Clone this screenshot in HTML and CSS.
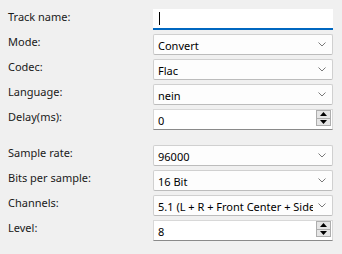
FILE: index.html
```html
<!DOCTYPE html>
<html lang="en">
<head>
<meta charset="UTF-8">
<title>Track settings</title>
<link rel="stylesheet" href="styles.css">
</head>
<body>
<div class="form">
    <div class="group">
        <label class="label">Track name:</label>
        <div class="field text-field"><span class="caret"></span></div>

        <label class="label">Mode:</label>
        <div class="field combo"><span class="value">Convert</span><svg class="chevron" width="8" height="5" viewBox="0 0 8 5"><path d="M0.5 0.5 L4 4 L7.5 0.5" fill="none" stroke="#7a7a7a" stroke-width="1"/></svg></div>

        <label class="label">Codec:</label>
        <div class="field combo"><span class="value">Flac</span><svg class="chevron" width="8" height="5" viewBox="0 0 8 5"><path d="M0.5 0.5 L4 4 L7.5 0.5" fill="none" stroke="#7a7a7a" stroke-width="1"/></svg></div>

        <label class="label">Language:</label>
        <div class="field combo"><span class="value">nein</span><svg class="chevron" width="8" height="5" viewBox="0 0 8 5"><path d="M0.5 0.5 L4 4 L7.5 0.5" fill="none" stroke="#7a7a7a" stroke-width="1"/></svg></div>

        <label class="label">Delay(ms):</label>
        <div class="field spin"><span class="value">0</span>
            <div class="spin-buttons">
                <div class="spin-btn"><svg width="7" height="4" viewBox="0 0 7 4"><path d="M3.5 0 L7 4 L0 4 Z" fill="#000"/></svg></div>
                <div class="spin-btn"><svg width="7" height="4" viewBox="0 0 7 4"><path d="M0 0 L7 0 L3.5 4 Z" fill="#000"/></svg></div>
            </div>
        </div>
    </div>

    <div class="group">
        <label class="label">Sample rate:</label>
        <div class="field combo"><span class="value">96000</span><svg class="chevron" width="8" height="5" viewBox="0 0 8 5"><path d="M0.5 0.5 L4 4 L7.5 0.5" fill="none" stroke="#7a7a7a" stroke-width="1"/></svg></div>

        <label class="label">Bits per sample:</label>
        <div class="field combo"><span class="value">16 Bit</span><svg class="chevron" width="8" height="5" viewBox="0 0 8 5"><path d="M0.5 0.5 L4 4 L7.5 0.5" fill="none" stroke="#7a7a7a" stroke-width="1"/></svg></div>

        <label class="label">Channels:</label>
        <div class="field combo"><span class="value">5.1 (L + R + Front Center + Side L + Side R + LFE)</span><svg class="chevron" width="8" height="5" viewBox="0 0 8 5"><path d="M0.5 0.5 L4 4 L7.5 0.5" fill="none" stroke="#7a7a7a" stroke-width="1"/></svg></div>

        <label class="label">Level:</label>
        <div class="field spin"><span class="value">8</span>
            <div class="spin-buttons">
                <div class="spin-btn"><svg width="7" height="4" viewBox="0 0 7 4"><path d="M3.5 0 L7 4 L0 4 Z" fill="#000"/></svg></div>
                <div class="spin-btn"><svg width="7" height="4" viewBox="0 0 7 4"><path d="M0 0 L7 0 L3.5 4 Z" fill="#000"/></svg></div>
            </div>
        </div>
    </div>
</div>
</body>
</html>
```
FILE: styles.css
```css
body {
    margin: 0;
    padding: 9px 9px 0 8px;
    background: #f0f0f0;
    font-family: "Noto Sans", "DejaVu Sans", sans-serif;
    font-size: 11px;
    color: #000;
}
.form {
    display: flex;
    flex-direction: column;
    gap: 15px;
}
.group {
    display: grid;
    grid-template-columns: 145px 180px;
    row-gap: 4px;
}
.label {
    line-height: 15px;
    color: #1a1a1a;
    align-self: start;
}
.field {
    height: 21px;
    box-sizing: border-box;
    display: flex;
    align-items: center;
    position: relative;
    overflow: hidden;
}
.value {
    white-space: nowrap;
    overflow: hidden;
    flex: 1;
    padding-top: 1px;
}
.text-field {
    background: #fff;
    border-bottom: 2px solid #0067c0;
    padding-left: 6px;
}
.caret {
    display: block;
    width: 1px;
    height: 13px;
    background: #000;
}
.combo {
    background: #fdfdfd;
    border: 1px solid #d0d0d0;
    border-bottom-color: #bcbcbc;
    border-radius: 2px;
    padding: 0 6px 0 4px;
}
.combo .value {
    margin-right: 5px;
}
.chevron {
    flex: none;
}
.spin {
    background: #fff;
    border: 1px solid #d8d8d8;
    border-bottom-color: #8a8a8a;
    padding-left: 4px;
}
.spin-buttons {
    display: flex;
    flex-direction: column;
    margin-right: 1px;
    width: 15px;
    height: 16px;
    border: 1px solid #adadad;
    box-sizing: border-box;
    align-self: flex-start;
}
.spin-btn {
    flex: 1;
    background: #e5e5e5;
    display: flex;
    align-items: center;
    justify-content: center;
}
.spin-btn + .spin-btn {
    border-top: 1px solid #adadad;
}
```
